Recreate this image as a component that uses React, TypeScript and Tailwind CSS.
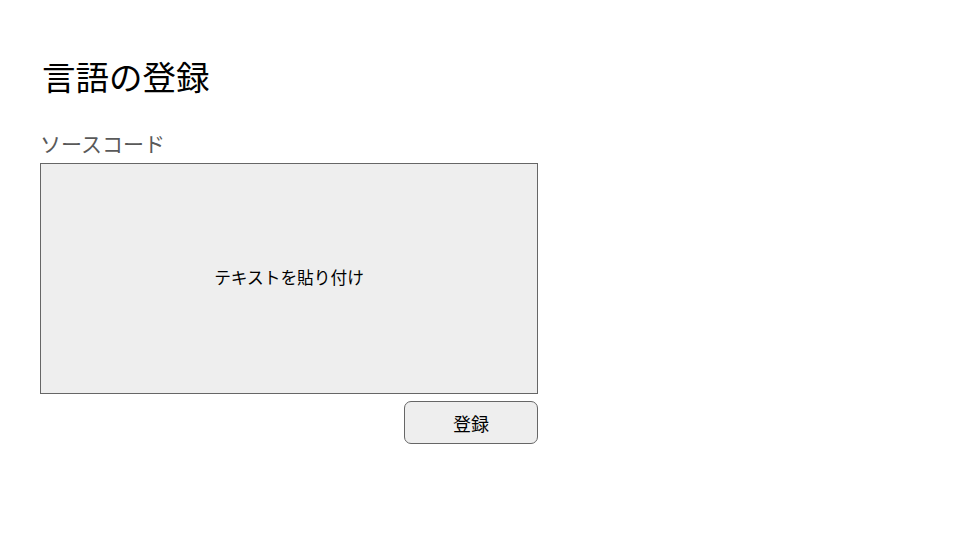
import React from "react";

export default function App() {
  return (
    <div
      className="w-[960px] h-[540px] bg-white text-black"
      style={{ fontFamily: '"Noto Sans CJK JP", "Noto Sans", sans-serif' }}
    >
      <div className="pl-[40px] pt-[54px] w-[538px] flex flex-col">
        <h1 className="text-[33.5px] leading-[44px] pl-[2px] font-normal text-black">言語の登録</h1>
        <div className="mt-[31px] text-[21px] leading-[28px] text-[#595959]">ソースコード</div>
        <div className="mt-[6px] h-[231px] border border-[#666666] bg-[#eeeeee] flex items-center justify-center">
          <span className="text-[16.7px] leading-[24px] text-black pb-[3px]">テキストを貼り付け</span>
        </div>
        <div className="mt-[7px] flex justify-end">
          <button className="w-[134px] h-[43px] rounded-[7px] border border-[#666666] bg-[#eeeeee] text-[18px] leading-[24px] text-black">
            登録
          </button>
        </div>
      </div>
    </div>
  );
}
